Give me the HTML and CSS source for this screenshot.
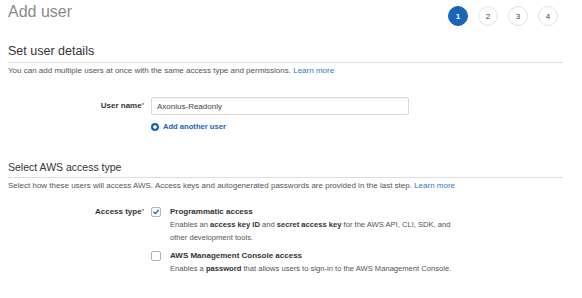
FILE: index.html
```html
<!DOCTYPE html>
<html lang="en">
<head>
<meta charset="utf-8">
<title>Add user</title>
<link rel="stylesheet" href="styles.css">
</head>
<body>
<div class="page">
  <header class="top">
    <h1 class="title">Add user</h1>
    <ol class="steps">
      <li class="step active">1</li>
      <li class="step">2</li>
      <li class="step">3</li>
      <li class="step">4</li>
    </ol>
  </header>

  <section class="section first">
    <h2 class="section-title big">Set user details</h2>
    <p class="desc">You can add multiple users at once with the same access type and permissions. <a class="link" href="#">Learn more</a></p>
    <div class="form-row user-row">
      <label class="label center" for="uname">User name<span class="req">*</span></label>
      <div class="control">
        <input id="uname" class="text-input" type="text" value="Axonius-Readonly">
      </div>
    </div>
    <div class="form-row">
      <div class="label"></div>
      <a class="add-link" href="#">
        <svg class="add-icon" viewBox="0 0 8 8" width="8" height="8" aria-hidden="true">
          <circle cx="4" cy="4" r="4" fill="#1a65b5"/>
          <path d="M4 2v4M2 4h4" stroke="#fff" stroke-width="1.4"/>
        </svg>
        Add another user
      </a>
    </div>
  </section>

  <section class="section second">
    <h2 class="section-title small">Select AWS access type</h2>
    <p class="desc">Select how these users will access AWS. Access keys and autogenerated passwords are provided in the last step. <a class="link" href="#">Learn more</a></p>
    <div class="form-row access-row">
      <div class="label">Access type<span class="req">*</span></div>
      <div class="options">
        <div class="option">
          <span class="checkbox">
            <svg viewBox="0 0 10 10" width="10" height="10" aria-hidden="true">
              <path d="M2.3 5.2 L4.2 7.1 L7.9 2.8" fill="none" stroke="#1a65b5" stroke-width="1.6" stroke-linecap="round" stroke-linejoin="round"/>
            </svg>
          </span>
          <div class="opt-body">
            <div class="opt-title">Programmatic access</div>
            <p class="opt-desc">Enables an <b>access key ID</b> and <b>secret access key</b> for the AWS API, CLI, SDK, and other development tools.</p>
          </div>
        </div>
        <div class="option">
          <span class="checkbox"></span>
          <div class="opt-body">
            <div class="opt-title">AWS Management Console access</div>
            <p class="opt-desc">Enables a <b>password</b> that allows users to sign-in to the AWS Management Console.</p>
          </div>
        </div>
      </div>
    </div>
  </section>
</div>
</body>
</html>
```

FILE: styles.css
```css
* { box-sizing: border-box; }

html, body {
  margin: 0;
  padding: 0;
  background: #fff;
}

body {
  font-family: "Liberation Sans", Arial, sans-serif;
  color: #444;
  font-size: 8px;
}

.page {
  padding: 0 19px 0 8px;
}

.top {
  display: flex;
  justify-content: space-between;
  align-items: flex-start;
}

.title {
  margin: 0;
  padding-top: 2px;
  font-size: 16px;
  line-height: 20px;
  font-weight: normal;
  color: #8a8a8a;
}

.steps {
  list-style: none;
  margin: 0;
  padding: 6px 5px 0 0;
  display: flex;
  gap: 10px;
}

.step {
  width: 20px;
  height: 20px;
  border-radius: 50%;
  border: 1px solid #e3e3e3;
  display: flex;
  align-items: center;
  justify-content: center;
  font-size: 8px;
  color: #444;
  background: #fff;
}

.step.active {
  background: #1a65b5;
  border-color: #1a65b5;
  color: #fff;
  font-weight: bold;
}

.section-title {
  margin: 0;
  font-weight: normal;
  color: #333;
  border-bottom: 1px solid #dedede;
}

.section-title.big {
  margin-top: 18px;
  font-size: 12.5px;
  line-height: 15px;
  padding-bottom: 3px;
}

.section-title.small {
  margin-top: 29px;
  font-size: 10.5px;
  line-height: 13px;
  padding-bottom: 3px;
}

.desc {
  margin: 3px 0 0;
  font-size: 8px;
  line-height: 10px;
  color: #555;
}

.link {
  color: #2a7ad0;
  text-decoration: none;
}

.form-row {
  display: flex;
  gap: 7px;
}

.label {
  width: 136px;
  flex: none;
  text-align: right;
  font-weight: bold;
  color: #333;
  font-size: 8px;
  line-height: 12px;
}

.label.center {
  align-self: center;
}

.req {
  font-size: 6px;
  vertical-align: top;
  font-weight: normal;
  position: relative;
  top: -1px;
}

.user-row {
  margin-top: 21px;
}

.text-input {
  display: block;
  width: 258px;
  height: 18px;
  margin: 0;
  padding: 0 5px;
  border: 1px solid #d9d9d9;
  border-radius: 2px;
  font-family: "Liberation Sans", Arial, sans-serif;
  font-size: 8px;
  color: #444;
  background: #fff;
  box-shadow: inset 0 1px 1px rgba(0,0,0,0.04);
}

.add-link {
  margin-top: 7px;
  display: flex;
  align-items: center;
  gap: 4px;
  font-size: 7.6px;
  line-height: 10px;
  font-weight: bold;
  color: #1a65b5;
  text-decoration: none;
}

.add-icon {
  display: block;
  flex: none;
}

.access-row {
  margin-top: 15px;
}

.options {
  display: flex;
  flex-direction: column;
  gap: 6px;
}

.option {
  display: flex;
  gap: 9px;
}

.checkbox {
  flex: none;
  width: 10px;
  height: 10px;
  margin-top: 1px;
  border: 1px solid #b5b5b5;
  border-radius: 2px;
  display: flex;
  align-items: center;
  justify-content: center;
  background: #fff;
}

.checkbox svg {
  display: block;
}

.opt-body {
  width: 300px;
}

.opt-title {
  font-weight: bold;
  color: #333;
  font-size: 8px;
  line-height: 12px;
}

.opt-desc {
  margin: 0;
  font-size: 7.6px;
  line-height: 13px;
  color: #555;
  width: 295px;
}

.opt-desc b {
  color: #333;
}
```
